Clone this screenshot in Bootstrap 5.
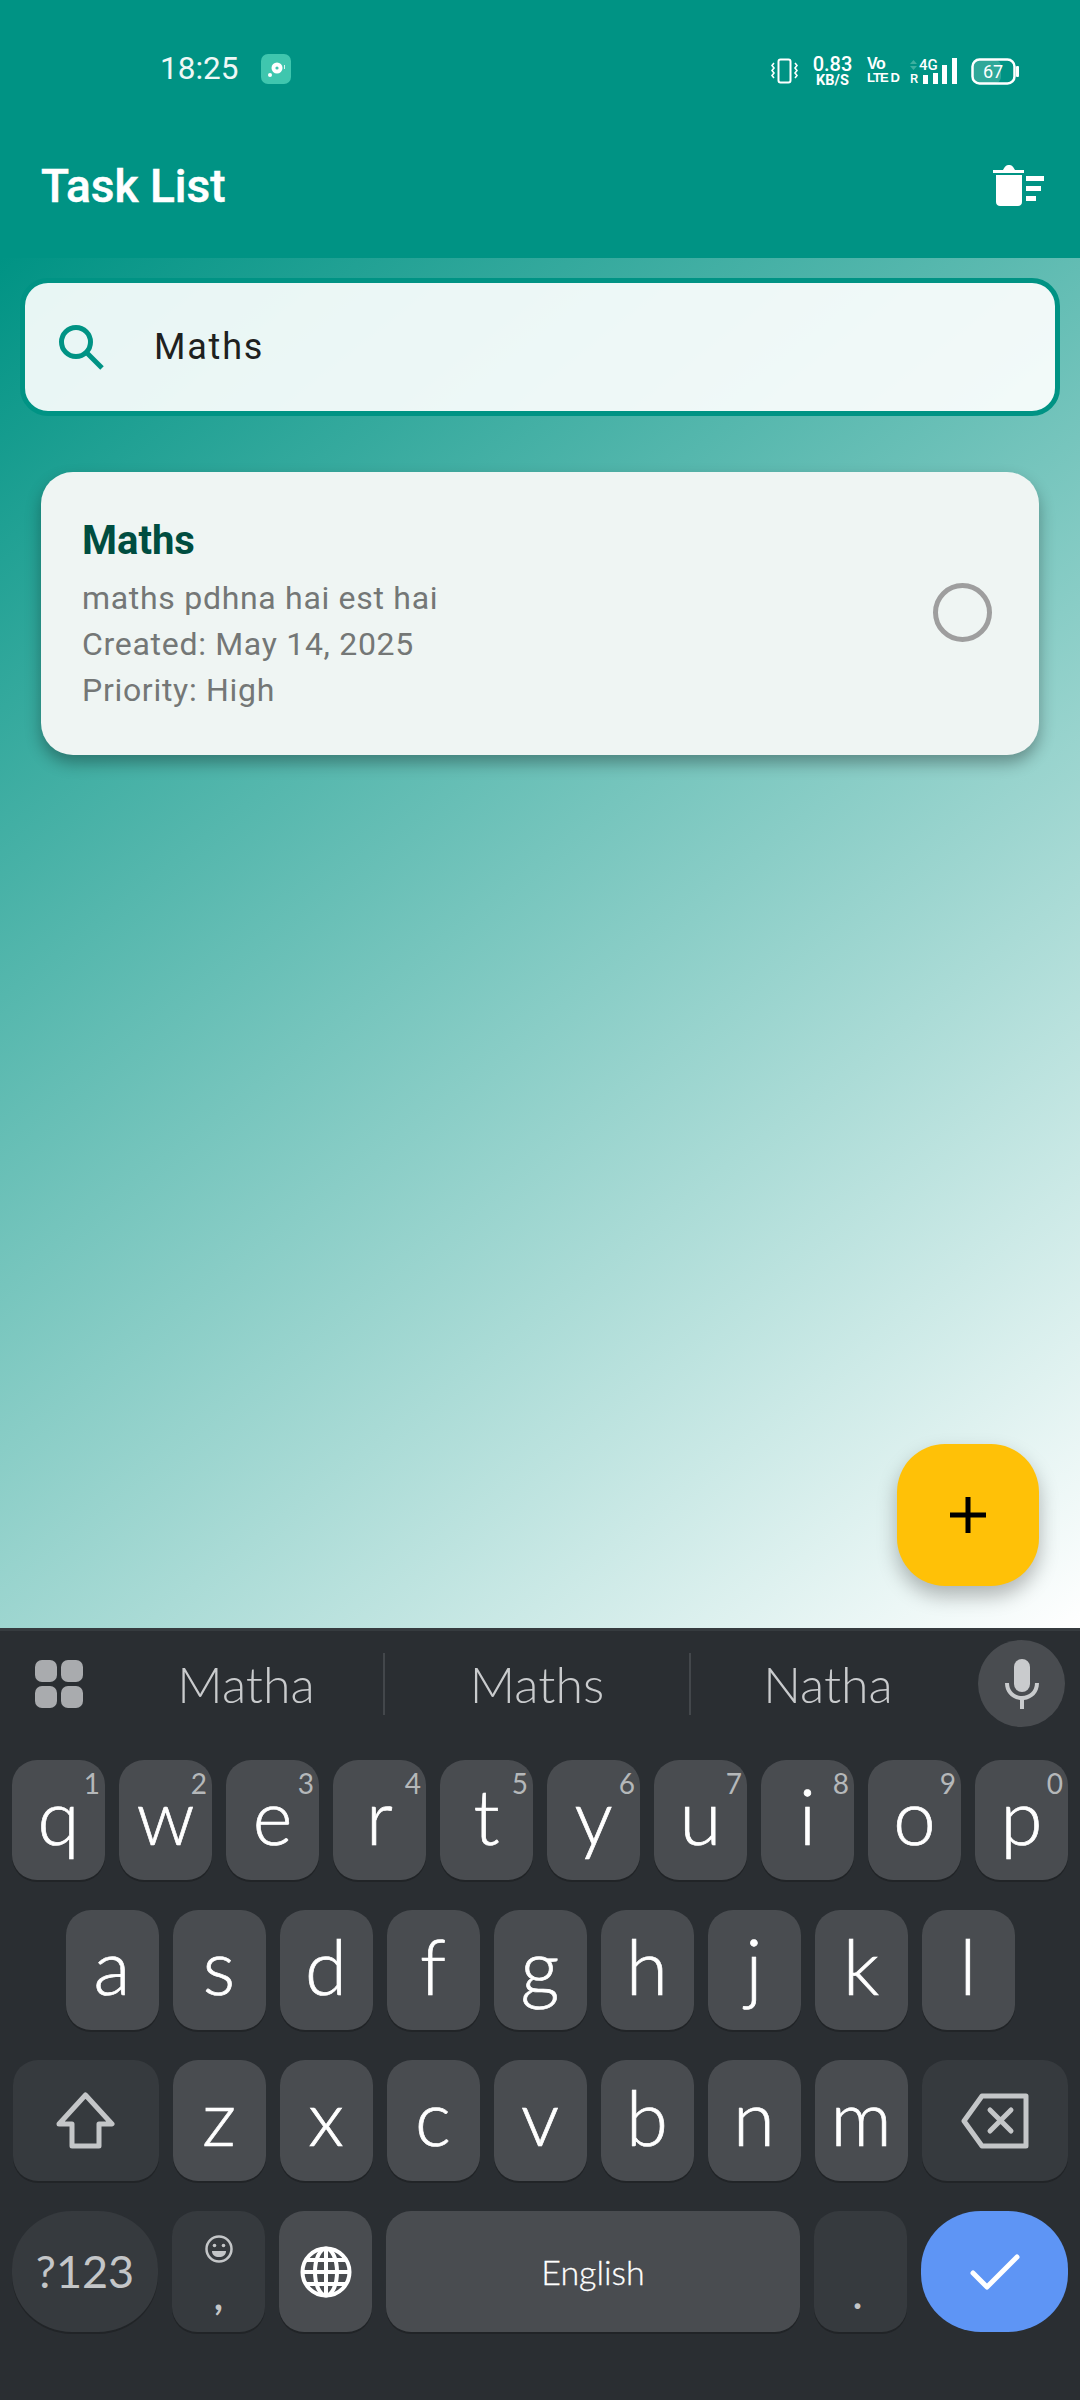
<!DOCTYPE html>
<html lang="en">
<head>
    <meta charset="UTF-8">
    <meta name="viewport" content="width=device-width, initial-scale=1.0">
    <title>Task List</title>
    <link rel="stylesheet" href="https://cdn.jsdelivr.net/npm/bootstrap@5.3.0/dist/css/bootstrap.min.css">
    <script src="https://cdn.jsdelivr.net/npm/bootstrap@5.3.0/dist/js/bootstrap.bundle.min.js"></script>
    <style>
        body { width: 1080px; height: 2400px; overflow: hidden; font-family: Roboto, sans-serif; background: #2a2e32; }
        .app-page { width: 1080px; height: 2400px; }
        /* Header */
        .app-header { height: 258px; background: #009384; color: #fff; }
        .status-row { height: 90px; padding: 51px 0 0 160px; }
        .status-time { font-size: 31.5px; line-height: 36px; width: 101px; color: #eef8f6; }
        .status-note { width: 30px; height: 30px; border-radius: 7px; background: #3fc6ae; margin-top: 3px; }
        .status-right { margin-left: auto; padding-right: 60px; height: 36px; margin-top: 2px; }
        .speed-box { width: 41px; margin: 0 14px; text-align: center; font-weight: 700; }
        .speed-top { font-size: 20px; line-height: 20px; font-weight: 500; }
        .speed-bot { font-size: 14.5px; line-height: 14px; }
        .volte-box { width: 29px; margin-right: 13px; font-family: "Liberation Sans", sans-serif; font-weight: 700; }
        .volte-top { font-size: 16px; line-height: 14px; letter-spacing: -.6px; }
        .volte-bot { font-size: 13px; line-height: 14px; letter-spacing: -.9px; white-space: nowrap; }
        .battery-icon { margin-left: 13px; }
        .app-title { height: 168px; padding: 24px 36px 0 41px; }
        .title-text { font-size: 46px; font-weight: 500; line-height: 52px; -webkit-text-stroke: .5px #fff; }
        /* Gradient area */
        .task-area { height: 1370px; position: relative; background: linear-gradient(141.7deg, #009384 0%, #ffffff 100%); }
        .search-box { height: 138px; margin: 20px 20px 0 20px; padding: 0 0 0 33px; border: 5px solid #009384; border-radius: 28px; background: rgba(255, 255, 255, .91); }
        .search-text { font-size: 36px; letter-spacing: 1.8px; color: #1e2120; margin-left: 50px; }
        .task-card { height: 283px; margin: 56px 41px 0 41px; padding: 0 47px 0 41px; border-radius: 32px; background: #eff5f3; box-shadow: 0 8px 16px rgba(0, 0, 0, .32); }
        .task-info { padding-top: 5px; }
        .task-name { font-size: 40px; line-height: 44px; font-weight: 700; color: #004d40; margin-bottom: 12px; }
        .task-line { font-size: 32px; line-height: 46px; letter-spacing: .7px; color: #747776; }
        .task-radio { width: 59px; height: 59px; border-radius: 50%; border: 5px solid #9e9e9e; margin-top: -2px; }
        .add-fab { position: absolute; left: 897px; top: 1186px; width: 142px; height: 142px; border-radius: 48px; background: #ffc107; box-shadow: 0 10px 20px rgba(0, 0, 0, .28); }
        /* Keyboard */
        .kb-panel { height: 772px; background: #2a2e32; border-top: 3px solid #363b3f; font-family: Lato, sans-serif; }
        .suggest-row { height: 129px; }
        .suggest-grid { width: 109px; padding: 29px 0 0 35px; }
        .suggest-cell { height: 62px; margin-top: 22px; font-size: 50px; font-weight: 300; color: #c9cbcd; line-height: 62px; text-align: center; }
        .suggest-a { width: 274px; }
        .suggest-b { width: 308px; border-left: 2px solid #43474b; border-right: 2px solid #43474b; }
        .mic-round { width: 87px; height: 87px; border-radius: 50%; background: #494c50; margin: 9px 0 0 13px; }
        .kb-keys { gap: 30px; }
        .kb-row { gap: 14px; }
        .kb-key { position: relative; width: 93px; height: 120px; border-radius: 25px; background: #494c50; box-shadow: 0 2px 0 #212427; color: #fff; font-size: 76px; font-weight: 300; line-height: 1; padding-bottom: 8px; -webkit-text-stroke: .7px #fff; }
        .key-alt { background: #363a3e; color: #c4c6c8; -webkit-text-stroke: 0; }
        .key-wide { width: 146px; padding-bottom: 0; }
        .key-tall { height: 121px; }
        .key-round { border-radius: 60px / 58px; }
        .key-go { background: #5e95f5; box-shadow: none; width: 147px; }
        .key-hint { position: absolute; right: 5px; top: 7px; font-size: 28px; line-height: 32px; color: #b5b8ba; font-weight: 400; -webkit-text-stroke: 0; }
        .key-sym { font-size: 45px; padding: 0; font-weight: 400; }
        .key-space { width: 414px; font-size: 34px; font-weight: 300; padding: 0; -webkit-text-stroke: .3px #fff; }
        .key-comma { font-size: 38px; font-weight: 700; line-height: 30px; padding: 0; }
        .key-dot { font-size: 38px; font-weight: 700; padding: 44px 6px 0 0; }
    </style>
</head>
<body>
<div class="app-page d-flex flex-column">

    <!-- Status bar and app bar -->
    <div class="app-header">
        <div class="status-row d-flex align-items-start">
            <div class="status-time">18:25</div>
            <div class="status-note d-flex align-items-center justify-content-center">
                <svg width="22" height="22" viewBox="0 0 22 22"><circle cx="12" cy="10" r="5.5" fill="#fff"/><circle cx="12" cy="10" r="1.6" fill="#3fc6ae"/><circle cx="5" cy="17" r="2" fill="#fff"/><rect x="19" y="7" width="1" height="4" fill="#d8f4ee"/></svg>
            </div>
            <div class="status-right d-flex align-items-center">
                <svg width="27" height="26" viewBox="0 0 27 26" fill="none" stroke="#fff" stroke-width="2"><rect x="7.5" y="1.5" width="12" height="23" rx="2"/><path d="M3 5l-2 2.500 2 2.500-2 2.500 2 2.500-2 2.500 2 2.500M24 5l2 2.500-2 2.500 2 2.500-2 2.500 2 2.500-2 2.500" stroke-width="1.600"/></svg>
                <div class="speed-box"><div class="speed-top">0.83</div><div class="speed-bot">KB/S</div></div>
                <div class="volte-box"><div class="volte-top">Vo</div><div class="volte-bot">LTE D</div></div>
                <svg width="49" height="30" viewBox="0 0 49 30">
                    <path d="M1 8l3.500-4 3.500 4zM1 10l3.500 4 3.500-4z" fill="#3fb0a0"/>
                    <text x="10" y="14" font-family="Roboto, sans-serif" font-size="15" font-weight="500" fill="#fff">4G</text>
                    <text x="1" y="27" font-family="Roboto, sans-serif" font-size="13" font-weight="500" fill="#fff">R</text>
                    <rect x="14" y="19" width="5" height="9" fill="#fff"/><rect x="24" y="17" width="5" height="11" fill="#fff"/><rect x="33" y="9" width="5" height="19" fill="#fff"/><rect x="43" y="2" width="5" height="26" fill="#fff"/>
                </svg>
                <svg class="battery-icon" width="49" height="27" viewBox="0 0 49 27">
                    <rect x="2" y="2" width="28" height="23" rx="6" fill="#2fa899"/>
                    <rect x="1.500" y="1.500" width="42" height="24" rx="7" fill="none" stroke="#fff" stroke-width="2.500"/>
                    <rect x="45" y="8" width="3" height="11" rx="1" fill="#fff"/>
                    <text x="22" y="20" text-anchor="middle" font-family="Roboto, sans-serif" font-size="18" fill="#fff">67</text>
                </svg>
            </div>
        </div>
        <div class="app-title d-flex align-items-center justify-content-between">
            <div class="title-text">Task List</div>
            <svg width="51" height="42" viewBox="0 0 51 42" fill="#fff">
                <path d="M0 8V5h10C11 3 13 0 15 0h2c2 0 4 3 5 5h9v3z"/>
                <path d="M3 10h26v27c0 2.500-2 4-4 4H7c-2 0-4-1.500-4-4z"/>
                <rect x="33" y="11" width="18" height="5"/><rect x="33" y="21" width="15" height="5"/><rect x="33" y="31" width="10" height="5"/>
            </svg>
        </div>
    </div>

    <!-- Search and list -->
    <div class="task-area">
        <div class="search-box d-flex align-items-center">
            <svg width="46" height="46" viewBox="0 0 46 46" fill="none" stroke="#009384" stroke-width="5"><circle cx="18" cy="18" r="14.500"/><path d="M28.500 28.500L44 44"/></svg>
            <div class="search-text">Maths</div>
        </div>
        <div class="task-card d-flex align-items-center justify-content-between">
            <div class="task-info">
                <div class="task-name">Maths</div>
                <div class="task-line">maths pdhna hai est hai</div>
                <div class="task-line">Created: May 14, 2025</div>
                <div class="task-line">Priority: High</div>
            </div>
            <div class="task-radio"></div>
        </div>
        <div class="add-fab d-flex align-items-center justify-content-center">
            <svg width="36" height="36" viewBox="0 0 36 36" fill="#000"><rect x="15.500" y="0" width="5" height="36"/><rect x="0" y="15.500" width="36" height="5"/></svg>
        </div>
    </div>

    <!-- Keyboard -->
    <div class="kb-panel">
        <div class="suggest-row d-flex">
            <div class="suggest-grid">
                <svg width="48" height="48" viewBox="0 0 48 48" fill="#a9abae"><rect width="22" height="22" rx="7"/><rect x="26" width="22" height="22" rx="7"/><rect y="26" width="22" height="22" rx="7"/><rect x="26" y="26" width="22" height="22" rx="7"/></svg>
            </div>
            <div class="suggest-cell suggest-a">Matha</div>
            <div class="suggest-cell suggest-b">Maths</div>
            <div class="suggest-cell suggest-a">Natha</div>
            <div class="mic-round d-flex align-items-center justify-content-center">
                <svg width="36" height="50" viewBox="0 0 36 50" fill="#c9cbcd"><rect x="10" y="0" width="16" height="33" rx="8"/><path d="M1 24h4c0 8 6 13 13 13s13-5 13-13h4c0 10-7 16-15 17v9h-4v-9C8 40 1 34 1 24z"/></svg>
            </div>
        </div>
        <div class="kb-keys d-flex flex-column">
            <div class="kb-row d-flex justify-content-center">
                <div class="kb-key d-flex align-items-center justify-content-center">q<span class="key-hint">1</span></div>
                <div class="kb-key d-flex align-items-center justify-content-center">w<span class="key-hint">2</span></div>
                <div class="kb-key d-flex align-items-center justify-content-center">e<span class="key-hint">3</span></div>
                <div class="kb-key d-flex align-items-center justify-content-center">r<span class="key-hint">4</span></div>
                <div class="kb-key d-flex align-items-center justify-content-center">t<span class="key-hint">5</span></div>
                <div class="kb-key d-flex align-items-center justify-content-center">y<span class="key-hint">6</span></div>
                <div class="kb-key d-flex align-items-center justify-content-center">u<span class="key-hint">7</span></div>
                <div class="kb-key d-flex align-items-center justify-content-center">i<span class="key-hint">8</span></div>
                <div class="kb-key d-flex align-items-center justify-content-center">o<span class="key-hint">9</span></div>
                <div class="kb-key d-flex align-items-center justify-content-center">p<span class="key-hint">0</span></div>
            </div>
            <div class="kb-row d-flex justify-content-center">
                <div class="kb-key d-flex align-items-center justify-content-center">a</div>
                <div class="kb-key d-flex align-items-center justify-content-center">s</div>
                <div class="kb-key d-flex align-items-center justify-content-center">d</div>
                <div class="kb-key d-flex align-items-center justify-content-center">f</div>
                <div class="kb-key d-flex align-items-center justify-content-center">g</div>
                <div class="kb-key d-flex align-items-center justify-content-center">h</div>
                <div class="kb-key d-flex align-items-center justify-content-center">j</div>
                <div class="kb-key d-flex align-items-center justify-content-center">k</div>
                <div class="kb-key d-flex align-items-center justify-content-center">l</div>
            </div>
            <div class="kb-row d-flex justify-content-center">
                <div class="kb-key key-alt key-wide key-tall d-flex align-items-center justify-content-center">
                    <svg width="59" height="57" viewBox="0 0 59 57" fill="none" stroke="#c4c6c8" stroke-width="5" stroke-linejoin="round"><path d="M29.500 3L56 32H43V54H16V32H3z"/></svg>
                </div>
                <div class="kb-key key-tall d-flex align-items-center justify-content-center">z</div>
                <div class="kb-key key-tall d-flex align-items-center justify-content-center">x</div>
                <div class="kb-key key-tall d-flex align-items-center justify-content-center">c</div>
                <div class="kb-key key-tall d-flex align-items-center justify-content-center">v</div>
                <div class="kb-key key-tall d-flex align-items-center justify-content-center">b</div>
                <div class="kb-key key-tall d-flex align-items-center justify-content-center">n</div>
                <div class="kb-key key-tall d-flex align-items-center justify-content-center">m</div>
                <div class="kb-key key-alt key-wide key-tall d-flex align-items-center justify-content-center">
                    <svg width="68" height="56" viewBox="0 0 68 56" fill="none" stroke="#c4c6c8" stroke-width="5" stroke-linejoin="round" stroke-linecap="round"><path d="M21 3H65V53H21L3 28z"/><path d="M29 17L50 38M50 17L29 38"/></svg>
                </div>
            </div>
            <div class="kb-row d-flex justify-content-center">
                <div class="kb-key key-alt key-wide key-tall key-round key-sym d-flex align-items-center justify-content-center">?123</div>
                <div class="kb-key key-alt key-tall key-comma d-flex flex-column align-items-center justify-content-center">
                    <svg width="30" height="30" viewBox="0 0 30 30" fill="none" stroke="#c4c6c8" stroke-width="2.500"><circle cx="15" cy="15" r="12.500"/><circle cx="10.500" cy="11.500" r="1.800" fill="#c4c6c8" stroke="none"/><circle cx="19.500" cy="11.500" r="1.800" fill="#c4c6c8" stroke="none"/><path d="M8 17h14c0 4-3 6-7 6s-7-2-7-6z" fill="#c4c6c8" stroke="none"/></svg>
                    <div class="mt-3">,</div>
                </div>
                <div class="kb-key key-tall d-flex align-items-center justify-content-center p-0">
                    <svg width="52" height="52" viewBox="0 0 52 52" fill="none" stroke="#fff" stroke-width="4"><circle cx="26" cy="26" r="23.500"/><ellipse cx="26" cy="26" rx="11" ry="23.500"/><path d="M26 2V50M2 26H50M6 14H46M6 38H46"/></svg>
                </div>
                <div class="kb-key key-tall key-space d-flex align-items-center justify-content-center">English</div>
                <div class="kb-key key-alt key-tall key-dot d-flex align-items-center justify-content-center">.</div>
                <div class="kb-key key-go key-tall key-round d-flex align-items-center justify-content-center p-0">
                    <svg width="50" height="36" viewBox="0 0 50 36" fill="none" stroke="#fff" stroke-width="5" stroke-linecap="round" stroke-linejoin="round"><path d="M3 19L17 33L47 3"/></svg>
                </div>
            </div>
        </div>
    </div>
</div>
</body>
</html>
